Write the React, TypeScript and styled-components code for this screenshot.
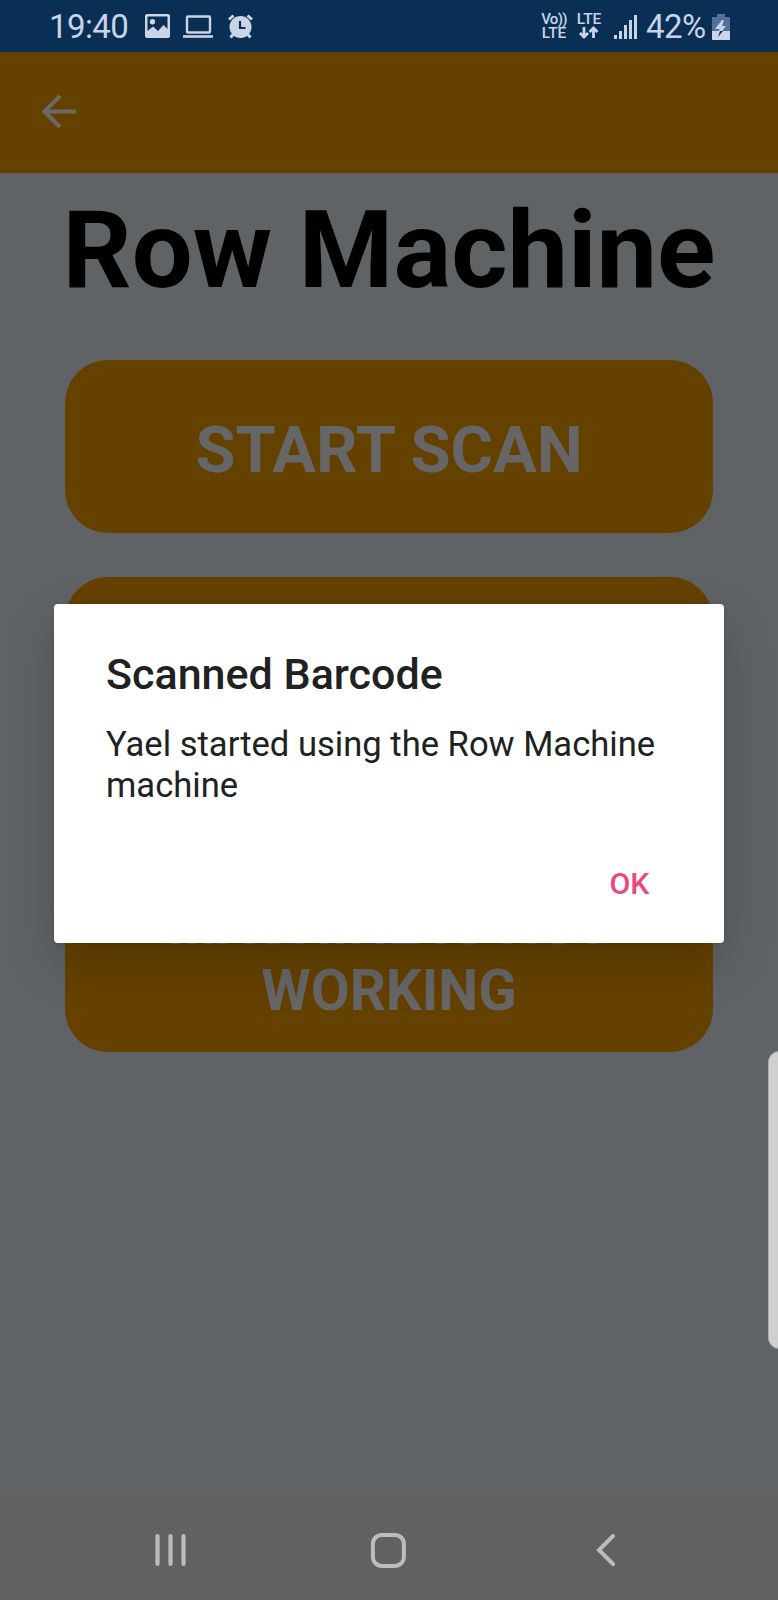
import React from 'react';
import styled, { createGlobalStyle } from 'styled-components';

const GlobalStyle = createGlobalStyle`
  * { box-sizing: border-box; }
  body { margin: 0; background: #5f6366; font-family: Roboto, "Liberation Sans", sans-serif; }
`;
const Screen = styled.div`
  position: relative;
  display: flex;
  flex-direction: column;
  height: 1600px;
  overflow: hidden;
  background: #5f6366;
`;
const StatusBar = styled.header`
  display: flex;
  align-items: center;
  justify-content: space-between;
  height: 52px;
  padding: 2px 48px 0 49px;
  background: #0a2f55;
  color: #c9d4e8;
  flex: none;
`;
const StatusGroup = styled.div<{ $gap: number }>`
  display: flex;
  align-items: center;
  gap: ${(p) => p.$gap}px;
`;
const StatusText = styled.span<{ $width: number }>`
  width: ${(p) => p.$width}px;
  font-size: 33px;
  line-height: 50px;
  letter-spacing: -0.6px;
  white-space: nowrap;
`;
const Network = styled.div<{ $space: number }>`
  display: flex;
  flex-direction: column;
  align-items: center;
  width: 26px;
  height: 31px;
  margin-right: ${(p) => p.$space}px;
  font-size: 15.5px;
  font-weight: 500;
  line-height: 14.5px;
  white-space: nowrap;
`;
const VoiceLabel = styled.span`
  font-size: 15px;
  letter-spacing: -0.7px;
`;
const AppBar = styled.nav`
  display: flex;
  align-items: center;
  height: 121px;
  padding: 0 0 2px 35px;
  background: #654100;
  flex: none;
`;
const Main = styled.main`
  display: flex;
  flex-direction: column;
  align-items: center;
  flex: 1;
`;
const Title = styled.h1`
  margin: 14px 0 47px;
  font-size: 108px;
  line-height: 126px;
  font-weight: 700;
  color: #000;
  white-space: nowrap;
`;
const ActionButton = styled.button<{ $height: number; $size: number; $drop?: number }>`
  display: flex;
  align-items: center;
  justify-content: center;
  width: 648px;
  height: ${(p) => p.$height}px;
  margin-bottom: 43.5px;
  padding: ${(p) => p.$drop ?? 0}px 80px 0;
  border: 0;
  border-radius: 43px;
  background: #654100;
  color: #666;
  font-family: inherit;
  font-size: ${(p) => p.$size}px;
  font-weight: 700;
  line-height: 1.172;
  text-align: center;
`;
const NavBar = styled.footer`
  display: flex;
  align-items: center;
  justify-content: space-between;
  height: 105px;
  padding: 5px 152px 0 152px;
  background: #616161;
  flex: none;
`;
const Dialog = styled.section`
  position: absolute;
  top: 604px;
  left: 54px;
  width: 670px;
  height: 339px;
  display: flex;
  flex-direction: column;
  padding: 45px 52px 32px;
  border-radius: 4px;
  background: #fff;
  color: #212121;
  box-shadow: 0 20px 50px rgba(0, 0, 0, 0.18), 0 0 5px rgba(0, 0, 0, 0.1);
`;
const DialogTitle = styled.h2`
  margin: 0 0 25px;
  font-size: 43px;
  line-height: 50px;
  font-weight: 500;
  white-space: nowrap;
`;
const DialogText = styled.p`
  margin: 0;
  font-size: 34.6px;
  line-height: 41px;
`;
const DialogAction = styled.button`
  align-self: flex-end;
  margin: auto 22.5px 0 0;
  padding: 0;
  border: 0;
  background: none;
  color: #e9497f;
  font: 500 30.3px/54px Roboto, sans-serif;
`;
const EdgeHandle = styled.div`
  position: absolute;
  right: -12px;
  top: 1051px;
  width: 22px;
  height: 298px;
  border: 1px solid #aaacae;
  border-radius: 14px;
  background: #cfcfd1;
`;

export default function App() {
  return (
    <>
      <GlobalStyle />
      <Screen>
        <StatusBar>
          <StatusGroup $gap={13}>
            <StatusText $width={83}>19:40</StatusText>
            <svg width="25" height="27" viewBox="0 0 25 27">
              <path fillRule="evenodd" fill="currentColor" d="M2 0H23Q25 0 25 2V22Q25 24 23 24H2Q0 24 0 22V2Q0 0 2 0ZM2.5 2.5V17L8 12.5L13 17L18.5 11L22.5 15V2.5ZM7.5 5A2.7 2.7 0 1 1 7.4 10.4A2.7 2.7 0 1 1 7.5 5Z" />
            </svg>
            <svg width="30" height="24" viewBox="0 0 30 24" fill="none" stroke="currentColor">
              <rect x="4" y="1.5" width="23" height="16" rx="1" strokeWidth="2.4" />
              <path d="M0 21.5H30" strokeWidth="2.6" />
            </svg>
            <svg width="28" height="27" viewBox="-1.5 0 28 27">
              <circle cx="13" cy="13" r="11" fill="currentColor" />
              <path d="M1.5 5.5L6 1.5M24.5 5.5L20 1.5M6 20L3 23.5M20 20L23 23.5" stroke="currentColor" strokeWidth="3" />
              <path d="M12.5 7V14H18" fill="none" stroke="#0a2f55" strokeWidth="2.2" />
            </svg>
          </StatusGroup>
          <StatusGroup $gap={8}>
            <Network $space={1}><VoiceLabel>Vo))</VoiceLabel><span>LTE</span></Network>
            <Network $space={4}>
              <span>LTE</span>
              <svg width="20" height="14" viewBox="0 0 20 14" fill="none" stroke="currentColor" strokeWidth="2.8">
                <path d="M5 1V11M1 7L5 11L9 7M14.5 12V2M10.5 6L14.5 2L18.5 6" />
              </svg>
            </Network>
            <svg width="24" height="26" viewBox="0 0 24 26" fill="currentColor">
              <path d="M0 21h3v4H0zM5 17h3v8H5zM10 11h3v14h-3zM15 6h3v19h-3zM20 1h3v24h-3z" />
            </svg>
            <StatusText $width={58}>42%</StatusText>
            <svg width="18" height="27" viewBox="0 0 18 27">
              <path d="M5 0H13V3H18V26H0V3H5Z" fill="#52709a" />
              <path d="M0 17H18V25Q18 26 17 26H1Q0 26 0 25Z" fill="currentColor" />
              <path d="M10 6L3 15H8L6.5 17H10L14 12H10L12 6Z" fill="currentColor" />
              <path d="M8 17H11L6 23Z" fill="#0a2f55" />
            </svg>
          </StatusGroup>
        </StatusBar>
        <AppBar>
          <svg width="48" height="48" viewBox="0 0 48 48" fill="none" stroke="#6b6866" strokeWidth="4">
            <path d="M41 23.5H10M25 8L9.5 23.5L25 39" />
          </svg>
        </AppBar>
        <Main>
          <Title>Row Machine</Title>
          <ActionButton $height={173} $size={65} $drop={7}>START SCAN</ActionButton>
          <ActionButton $height={173} $size={65} />
          <ActionButton $height={258.5} $size={56.5} $drop={72}>MACHINE IS NOT WORKING</ActionButton>
        </Main>
        <NavBar>
          <svg width="37" height="40" viewBox="0 0 37 40" stroke="#bcbcbc" strokeWidth="4.2" strokeLinecap="round">
            <path d="M5.5 6V34M18.5 6V34M31.5 6V34" />
          </svg>
          <svg width="40" height="40" viewBox="0 0 40 40" fill="none" stroke="#bcbcbc" strokeWidth="4">
            <rect x="4.9" y="4.9" width="31" height="31" rx="9" />
          </svg>
          <svg width="40" height="40" viewBox="0 0 40 40" fill="none" stroke="#bcbcbc" strokeWidth="4" strokeLinecap="round">
            <path d="M27 6L13 20L27 34" />
          </svg>
        </NavBar>
        <Dialog role="dialog">
          <DialogTitle>Scanned Barcode</DialogTitle>
          <DialogText>Yael started using the Row Machine machine</DialogText>
          <DialogAction>OK</DialogAction>
        </Dialog>
        <EdgeHandle />
      </Screen>
    </>
  );
}
